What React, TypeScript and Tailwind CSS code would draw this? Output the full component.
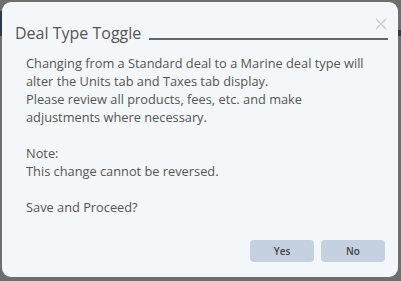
export default function App() {
    return (
        <div
            className="relative h-[281px] w-[401px] overflow-hidden bg-[#6e6e6e] p-[2px]"
            style={{ fontFamily: '"Open Sans", "Noto Sans", sans-serif' }}
        >
            {/* bits of the page behind the overlay */}
            <div className="absolute top-[11px] left-0 h-[25px] w-[3px] bg-[#2c3a4a]" />
            <div className="absolute top-[30px] right-0 h-[6px] w-[3px] bg-[#2c3a4a]" />

            <div className="relative flex h-[275px] w-[396px] flex-col rounded-[9px] bg-[#f4f7fa]">
                <header className="flex items-end pt-[20px] pr-[10px] pl-[13px]">
                    <h3 className="text-[16px] leading-[23px] text-[#555]">Deal Type Toggle</h3>
                    <div className="mb-[5px] ml-[8px] h-[2px] flex-1 bg-[#666]" />
                </header>
                <button className="absolute top-[15px] right-[10px] p-[1px]" aria-label="Close">
                    <svg width="12" height="12" viewBox="0 0 12 12" stroke="#c9cbcd" strokeWidth="1.2">
                        <path d="M1 1L11 11M11 1L1 11" />
                    </svg>
                </button>

                <main className="flex flex-1 flex-col px-[24px] pt-[9px] pb-[15px]">
                    <p className="text-[12.8px] leading-[18px] text-[#555]">
                        Changing from a Standard deal to a Marine deal type will
                        <br />
                        alter the Units tab and Taxes tab display.
                        <br />
                        Please review all products, fees, etc. and make
                        <br />
                        adjustments where necessary.
                        <br />
                        <br />
                        Note:
                        <br />
                        This change cannot be reversed.
                        <br />
                        <br />
                        Save and Proceed?
                    </p>

                    <div className="mt-auto mr-[-11px] flex justify-end gap-[7px]">
                        <button className="h-[22px] w-[64px] rounded-[4px] bg-[#c5d1e0] text-[10px] font-semibold text-[#444]">
                            Yes
                        </button>
                        <button className="h-[22px] w-[64px] rounded-[4px] bg-[#c5d1e0] text-[10px] font-semibold text-[#444]">
                            No
                        </button>
                    </div>
                </main>
            </div>
        </div>
    );
}
